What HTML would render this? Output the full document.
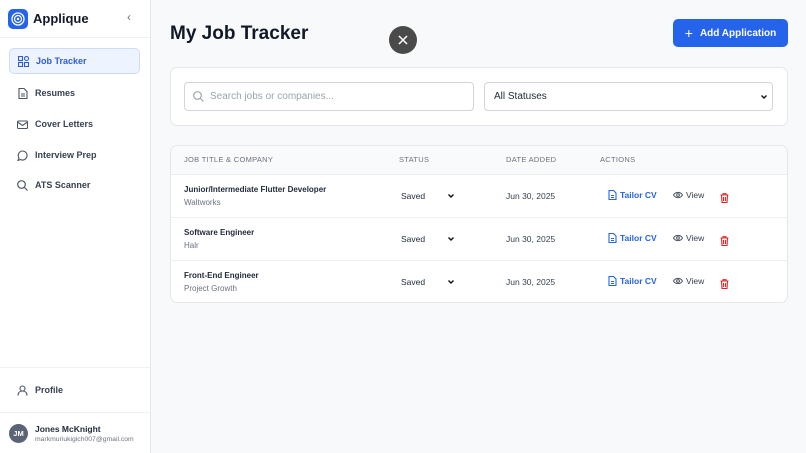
<!DOCTYPE html>
<html><head><meta charset="utf-8"><style>
*{box-sizing:border-box;margin:0;padding:0}
body{width:806px;height:453px;overflow:hidden;font-family:"Liberation Sans",sans-serif;background:#f8f9fb;position:relative;color:#111827}
.sb{position:absolute;left:0;top:0;width:151px;height:453px;background:#fff;border-right:1px solid #e5e7eb}
.hdr{height:38px;border-bottom:1px solid #eef0f3;position:relative}
.logo{position:absolute;left:8px;top:9px;width:20px;height:20px;border-radius:5px;background:#2563eb}
.brand{position:absolute;left:33px;top:11px;font-size:13px;font-weight:bold}
.chev{position:absolute;left:127px;top:10px;font-size:12px;color:#6b7280}
.nav{position:absolute;left:9px;width:131px;height:26px;font-size:9px;color:#374151;font-weight:bold;display:flex;align-items:center;padding-left:8px;border-radius:5px}
.nav svg{margin-right:7px}
.nav.act{background:#eef4ff;border:1px solid #cfdcf8;color:#2f5bd6}
.line{position:absolute;left:0;width:150px;height:1px;background:#eef0f3}
h1{position:absolute;left:170px;top:23px;font-size:19px;font-weight:bold;color:#111827}
.x{position:absolute;left:389px;top:26px;width:28px;height:28px;border-radius:50%;background:#4a4a4a}
.add{position:absolute;left:673px;top:19px;width:115px;height:28px;border-radius:5px;background:#2563eb;color:#fff;font-size:10px;font-weight:bold;display:flex;align-items:center;justify-content:center}
.card{position:absolute;left:170px;width:618px;background:#fff;border:1px solid #e5e7eb;border-radius:7px}
.inp{position:absolute;top:14px;height:29px;border:1px solid #d1d5db;border-radius:4px;font-size:10px;color:#9ca3af;display:flex;align-items:center}
.th{position:absolute;top:0;height:28px;line-height:28px;font-size:7.5px;color:#6b7280;letter-spacing:.3px}
.row{position:absolute;left:0;width:616px;height:43px;border-top:1px solid #eceef1}
.row .t{position:absolute;left:13px;top:10px;font-size:8px;font-weight:bold;color:#1f2937}
.row .c{position:absolute;left:13px;top:23px;font-size:8px;color:#6b7280}
.row .s{position:absolute;left:230px;top:16px;font-size:8.5px;color:#1f2937}
.row .a{position:absolute;left:277px;top:19px;line-height:0}
.row .a svg{display:block}
.row .d{position:absolute;left:335px;top:16px;font-size:8.5px;color:#374151}
.row .tc{position:absolute;left:437px;top:15px;font-size:8.5px;color:#2563eb;font-weight:bold;display:flex;align-items:center;gap:3px}
.row .v{position:absolute;left:502px;top:15px;font-size:8.5px;color:#374151;display:flex;align-items:center;gap:3px}
.row .del{position:absolute;left:549px;top:15px}
</style></head><body>
<div class="sb">
 <div class="hdr"><div class="logo"><svg width="20" height="20"><circle cx="10" cy="10" r="6" fill="none" stroke="#fff" stroke-width="1.3"/><circle cx="10" cy="10" r="3.5" fill="none" stroke="#fff" stroke-width="1.2"/><circle cx="10" cy="10" r="1.2" fill="#fff"/></svg></div><div class="brand">Applique</div><div class="chev">‹</div></div>
 <div class="nav act" style="top:48px"><svg width="11" height="11" fill="none" stroke="#2f5bd6" stroke-width="1.1"><rect x=".5" y=".5" width="4" height="4"/><rect x="6.5" y=".5" width="4" height="4" rx="2"/><rect x=".5" y="6.5" width="4" height="4"/><rect x="6.5" y="6.5" width="4" height="4"/></svg>Job Tracker</div>
 <div class="nav" style="top:80px"><svg width="11" height="11" fill="none" stroke="#4b5563" stroke-width="1.1"><path d="M2 .5h5l3 3v7H2z M4 6h4 M4 8h4"/></svg>Resumes</div>
 <div class="nav" style="top:111px"><svg width="11" height="11" fill="none" stroke="#4b5563" stroke-width="1.1"><rect x=".5" y="2" width="10" height="7.5" rx="1"/><path d="M.5 3l5 3.5 5-3.5"/></svg>Cover Letters</div>
 <div class="nav" style="top:142px"><svg width="11" height="11" fill="none" stroke="#4b5563" stroke-width="1.1"><path d="M5.5 1a4.5 4.5 0 1 1-2 8.5L1 10.5l1-2.5A4.5 4.5 0 0 1 5.5 1z"/></svg>Interview Prep</div>
 <div class="nav" style="top:172px"><svg width="11" height="11" fill="none" stroke="#4b5563" stroke-width="1.2"><circle cx="4.5" cy="4.5" r="3.8"/><path d="M7.5 7.5l3 3"/></svg>ATS Scanner</div>
 <div class="line" style="top:367px"></div>
 <div class="nav" style="top:377px"><svg width="11" height="11" fill="none" stroke="#4b5563" stroke-width="1.1"><circle cx="5.5" cy="3.5" r="2.5"/><path d="M1 10.5c0-3 2-4.5 4.5-4.5s4.5 1.5 4.5 4.5"/></svg>Profile</div>
 <div class="line" style="top:412px"></div>
 <div style="position:absolute;left:9px;top:424px;width:19px;height:19px;border-radius:50%;background:#5b6474;color:#fff;font-size:7.5px;font-weight:bold;text-align:center;line-height:19px">JM</div>
 <div style="position:absolute;left:35px;top:424px;font-size:8.5px;font-weight:bold;color:#1f2937">Jones McKnight</div>
 <div style="position:absolute;left:35px;top:436px;font-size:6.8px;color:#6b7280">markmuriukigich007@gmail.com</div>
</div>
<h1>My Job Tracker</h1>
<div class="x"><svg width="28" height="28"><path d="M10 10l8 8M18 10l-8 8" stroke="#fff" stroke-width="1.5"/></svg></div>
<div class="add"><span style="font-size:14px;font-weight:normal;margin-right:7px">+</span>Add Application</div>
<div class="card" style="top:67px;height:59px">
 <div class="inp" style="left:13px;width:290px;padding-left:8px"><svg width="11" height="11" fill="none" stroke="#9ca3af" stroke-width="1.2" style="margin-right:6px"><circle cx="4.5" cy="4.5" r="3.8"/><path d="M7.5 7.5l3 3"/></svg>Search jobs or companies...</div>
 <div class="inp" style="left:313px;width:289px;padding-left:9px;color:#1f2937">All Statuses<svg style="position:absolute;right:5px;top:12px" width="6" height="4"><path d="M.5.5L3 3 5.5.5" fill="none" stroke="#111" stroke-width="1.4"/></svg></div>
</div>
<div class="card" style="top:145px;height:158px;overflow:hidden">
 <div style="position:absolute;left:0;top:0;width:618px;height:28px;background:#f9fafb"></div>
 <div class="th" style="left:13px">JOB TITLE &amp; COMPANY</div>
 <div class="th" style="left:228px">STATUS</div>
 <div class="th" style="left:335px">DATE ADDED</div>
 <div class="th" style="left:429px">ACTIONS</div>
 <div class="row" style="top:28px"><div class="t">Junior/Intermediate Flutter Developer</div><div class="c">Waltworks</div><div class="s">Saved</div><div class="a"><svg width="6" height="4"><path d="M.5.5L3 3 5.5.5" fill="none" stroke="#111" stroke-width="1.4"/></svg></div><div class="d">Jun 30, 2025</div><div class="tc"><svg width="9" height="10" fill="none" stroke="#2563eb" stroke-width="1.1"><path d="M1 .5h4.5l2.5 2.5v6.5H1z M3 5.5h3 M3 7.5h3"/></svg>Tailor CV</div><div class="v"><svg width="10" height="8" fill="none" stroke="#4b5563" stroke-width="1"><path d="M.5 4C2.5.5 7.5.5 9.5 4 7.5 7.5 2.5 7.5.5 4z"/><circle cx="5" cy="4" r="1.4"/></svg>View</div><div class="del"><svg width="9" height="10" fill="none" stroke="#dc2626" stroke-width="1.1"><path d="M.5 2h8 M3 2V.7h3V2 M1.5 2l.5 7.5h5l.5-7.5 M3.5 4v4 M5.5 4v4"/></svg></div></div>
 <div class="row" style="top:71px"><div class="t">Software Engineer</div><div class="c">Halr</div><div class="s">Saved</div><div class="a"><svg width="6" height="4"><path d="M.5.5L3 3 5.5.5" fill="none" stroke="#111" stroke-width="1.4"/></svg></div><div class="d">Jun 30, 2025</div><div class="tc"><svg width="9" height="10" fill="none" stroke="#2563eb" stroke-width="1.1"><path d="M1 .5h4.5l2.5 2.5v6.5H1z M3 5.5h3 M3 7.5h3"/></svg>Tailor CV</div><div class="v"><svg width="10" height="8" fill="none" stroke="#4b5563" stroke-width="1"><path d="M.5 4C2.5.5 7.5.5 9.5 4 7.5 7.5 2.5 7.5.5 4z"/><circle cx="5" cy="4" r="1.4"/></svg>View</div><div class="del"><svg width="9" height="10" fill="none" stroke="#dc2626" stroke-width="1.1"><path d="M.5 2h8 M3 2V.7h3V2 M1.5 2l.5 7.5h5l.5-7.5 M3.5 4v4 M5.5 4v4"/></svg></div></div>
 <div class="row" style="top:114px"><div class="t">Front-End Engineer</div><div class="c">Project Growth</div><div class="s">Saved</div><div class="a"><svg width="6" height="4"><path d="M.5.5L3 3 5.5.5" fill="none" stroke="#111" stroke-width="1.4"/></svg></div><div class="d">Jun 30, 2025</div><div class="tc"><svg width="9" height="10" fill="none" stroke="#2563eb" stroke-width="1.1"><path d="M1 .5h4.5l2.5 2.5v6.5H1z M3 5.5h3 M3 7.5h3"/></svg>Tailor CV</div><div class="v"><svg width="10" height="8" fill="none" stroke="#4b5563" stroke-width="1"><path d="M.5 4C2.5.5 7.5.5 9.5 4 7.5 7.5 2.5 7.5.5 4z"/><circle cx="5" cy="4" r="1.4"/></svg>View</div><div class="del"><svg width="9" height="10" fill="none" stroke="#dc2626" stroke-width="1.1"><path d="M.5 2h8 M3 2V.7h3V2 M1.5 2l.5 7.5h5l.5-7.5 M3.5 4v4 M5.5 4v4"/></svg></div></div>
</div>
</body></html>
